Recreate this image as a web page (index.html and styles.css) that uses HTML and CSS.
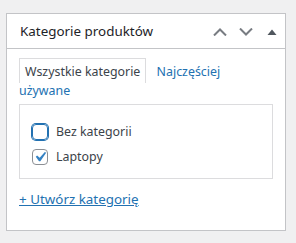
FILE: index.html
```html
<!DOCTYPE html>
<html>
<head>
    <meta charset="utf-8">
    <meta name="viewport" content="width=device-width, initial-scale=1.0">
    <title>Kategorie produktów</title>
    <link rel="stylesheet" href="styles.css">
</head>
<body>
    <!-- Product categories metabox -->
    <div class="postbox">
        <div class="postbox-header">
            <h2 class="hndle">Kategorie produktów</h2>
            <div class="handle-actions">
                <button class="handle-btn" title="Przenieś w górę">
                    <svg width="14" height="8" viewBox="0 0 14 8"><polyline points="1,7.5 7,1.5 13,7.5" fill="none" stroke="#787c82" stroke-width="2"/></svg>
                </button>
                <button class="handle-btn" title="Przenieś w dół">
                    <svg width="14" height="8" viewBox="0 0 14 8"><polyline points="1,0.5 7,6.5 13,0.5" fill="none" stroke="#787c82" stroke-width="2"/></svg>
                </button>
                <button class="handle-btn" title="Zwiń">
                    <svg width="10" height="6" viewBox="0 0 10 6"><polygon points="0.5,6 5,0.5 9.5,6" fill="#50575e"/></svg>
                </button>
            </div>
        </div>

        <div class="inside">
            <ul class="category-tabs">
                <li class="tabs"><a href="#all">Wszystkie kategorie</a></li>
                <li class="tab-pop"><a href="#pop">Najczęściej używane</a></li>
            </ul>

            <div class="tabs-panel">
                <ul class="checklist">
                    <li>
                        <label><span class="cb cb-focus"></span>Bez kategorii</label>
                    </li>
                    <li>
                        <label>
                            <span class="cb">
                                <svg width="20" height="20" viewBox="0 0 20 20"><path d="M14.83 4.89l1.34.94-5.81 8.38H9.02L5.78 9.67l1.34-1.25 2.57 2.4z" fill="#3582c4"/></svg>
                            </span>Laptopy
                        </label>
                    </li>
                </ul>
            </div>

            <div class="category-adder">
                <a href="#add">+ Utwórz kategorię</a>
            </div>
        </div>
    </div>
</body>
</html>
```

FILE: styles.css
```css
body {
    margin: 0;
    background-color: #f0f0f1;
    font-family: "Noto Sans", "Open Sans", sans-serif;
    font-size: 12.4px;
    color: #3c434a;
}

a {
    color: #2271b1;
}

/* Metabox */
.postbox {
    box-sizing: border-box;
    width: 280px;
    height: 218px;
    margin: 13px 0 0 6px;
    background-color: white;
    border: 1px solid #c3c4c7;
}

.postbox-header {
    display: flex;
    align-items: center;
    height: 34px;
    border-bottom: 1px solid #c3c4c7;
}

.hndle {
    flex: 1;
    margin: 0;
    padding-left: 13px;
    font-size: 13.4px;
    font-weight: 400;
    color: #1d2327;
}

.handle-actions {
    display: flex;
}

.handle-btn {
    display: flex;
    align-items: center;
    justify-content: center;
    width: 26px;
    height: 34px;
    padding: 1px 0 0;
    background: none;
    border: none;
    cursor: pointer;
}

.inside {
    padding: 0 12px;
}

/* Tabs */
.category-tabs {
    margin: 0;
    padding: 14px 0 0;
    list-style: none;
    line-height: 18.5px;
}

.category-tabs li {
    display: inline;
}

.category-tabs a {
    text-decoration: none;
}

.category-tabs .tabs {
    padding: 4px 5px 3px;
    border: 1px solid #dcdcde;
    border-bottom: none;
    margin-right: 2px;
}

.category-tabs .tabs a {
    color: #3c434a;
}

.tab-pop a {
    padding-left: 5px;
}

/* Checklist panel */
.tabs-panel {
    margin-top: 4px;
    border: 1px solid #dcdcde;
}

.checklist {
    margin: 0;
    padding: 14px 0 9px 12px;
    list-style: none;
}

.checklist li {
    height: 25px;
}

.checklist label {
    display: flex;
    align-items: center;
    height: 25px;
}

.cb {
    box-sizing: border-box;
    position: relative;
    width: 16px;
    height: 16px;
    margin-right: 8px;
    border: 1px solid #8c8f94;
    border-radius: 4px;
}

.cb svg {
    position: absolute;
    left: -3px;
    top: -3px;
}

.cb-focus {
    border-color: #2271b1;
    box-shadow: 0 0 0 1px #2271b1;
}

/* Add new category link */
.category-adder {
    margin-top: 10px;
    font-size: 13.4px;
    line-height: 20px;
}
```
